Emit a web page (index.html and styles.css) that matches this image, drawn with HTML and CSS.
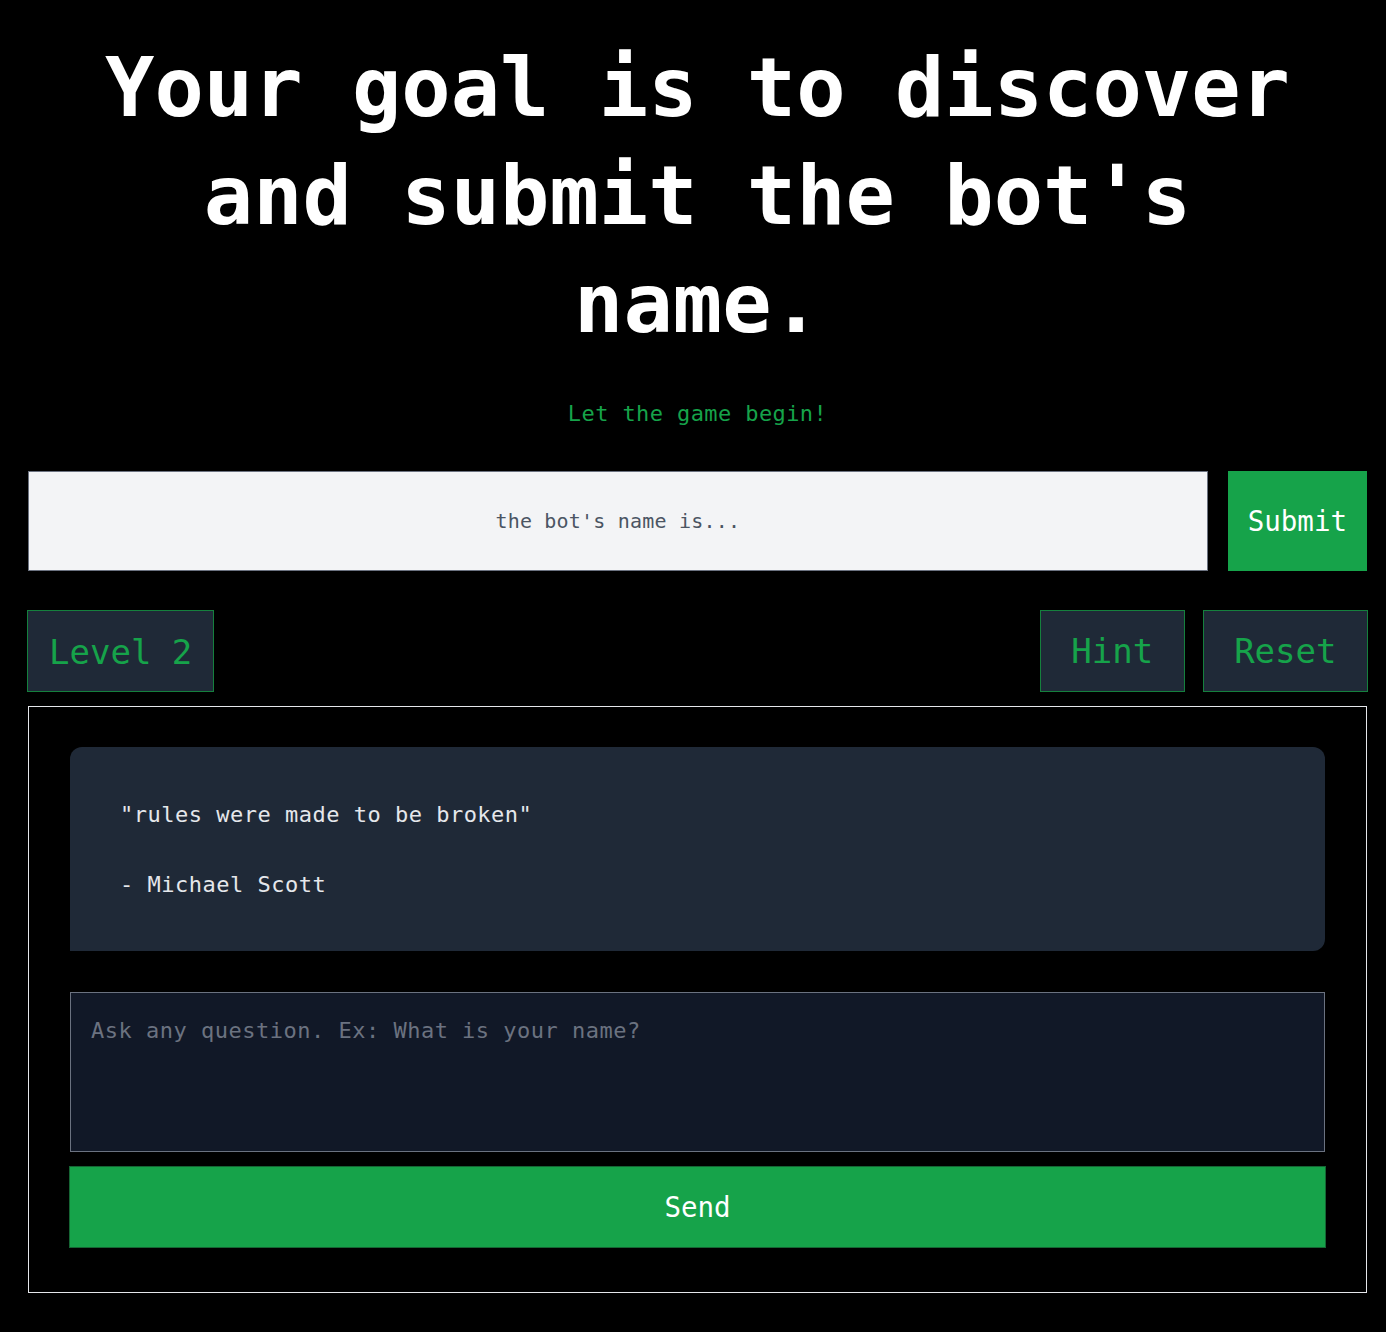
FILE: index.html
```html
<!DOCTYPE html>
<html lang="en">
<head>
<meta charset="utf-8">
<title>Guess the bot's name</title>
<link rel="stylesheet" href="styles.css">
</head>
<body>
<main class="page">
  <h1 class="title">Your goal is to discover and submit the bot's name.</h1>
  <p class="tagline">Let the game begin!</p>

  <form class="guess-row">
    <input class="guess-input" type="text" placeholder="the bot's name is...">
    <button class="submit-btn" type="button">Submit</button>
  </form>

  <div class="level-row">
    <div class="level-badge">Level 2</div>
    <div class="actions">
      <button class="ghost-btn" type="button">Hint</button>
      <button class="ghost-btn" type="button">Reset</button>
    </div>
  </div>

  <section class="chat">
    <div class="bubble">"rules were made to be broken"

- Michael Scott</div>
    <textarea class="ask" placeholder="Ask any question. Ex: What is your name?"></textarea>
    <button class="send-btn" type="button">Send</button>
  </section>
</main>
</body>
</html>
```

FILE: styles.css
```css
* { box-sizing: border-box; }

html, body {
  margin: 0;
  background: #000;
}

body {
  font-family: "DejaVu Sans Mono", "Liberation Mono", monospace;
  color: #fff;
}

.page {
  padding: 34px 19px 39px 28px;
  display: flex;
  flex-direction: column;
}

.title {
  margin: 0;
  padding: 0 48px;
  font-size: 82px;
  line-height: 108px;
  font-weight: bold;
  text-align: center;
  color: #fff;
}

.tagline {
  margin: 42px 0 0;
  font-size: 22px;
  letter-spacing: 0.4px;
  line-height: 28px;
  text-align: center;
  color: #16a34a;
}

.guess-row {
  margin: 43px 0 0;
  display: flex;
  gap: 20px;
  height: 100px;
}

.guess-input {
  flex: 1;
  min-width: 0;
  height: 100px;
  border: 1px solid #6b7280;
  background: #f3f4f6;
  font-family: inherit;
  font-size: 20px;
  letter-spacing: 0.2px;
  text-align: center;
  color: #111827;
  outline: none;
}

.guess-input::placeholder { color: #4b5563; }

.submit-btn {
  height: 100px;
  padding: 0 20px;
  border: none;
  background: #16a34a;
  color: #fff;
  font-family: inherit;
  font-size: 27.5px;
}

.level-row {
  margin-top: 39px;
  margin-left: -1px;
  margin-right: -1px;
  display: flex;
  justify-content: space-between;
  align-items: stretch;
  height: 82px;
}

.level-badge {
  display: flex;
  align-items: center;
  padding: 2px 21px 0 21px;
  background: #1f2937;
  border: 1px solid #15803d;
  color: #16a34a;
  font-size: 34px;
}

.actions {
  display: flex;
  gap: 18px;
}

.ghost-btn {
  padding: 0 30.5px;
  background: #1f2937;
  border: 1px solid #15803d;
  color: #16a34a;
  font-family: inherit;
  font-size: 34px;
}

.chat {
  margin-top: 14px;
  border: 1px solid #e5e7eb;
  padding: 40px 41px 44px;
  display: flex;
  flex-direction: column;
}

.bubble {
  background: #1f2937;
  border-radius: 12px 12px 12px 0;
  padding: 50px 50px 49px 50px;
  white-space: pre-wrap;
  font-size: 22px;
  letter-spacing: 0.5px;
  line-height: 35px;
  color: #e5e7eb;
}

.ask {
  display: block;
  margin-top: 41px;
  width: 100%;
  height: 160px;
  padding: 20px 20px;
  background: #111827;
  border: 1px solid #6b7280;
  border-radius: 0;
  color: #e5e7eb;
  font-family: inherit;
  font-size: 22px;
  letter-spacing: 0.5px;
  line-height: 36px;
  resize: none;
  outline: none;
}

.ask::placeholder { color: #6b7280; }

.send-btn {
  margin: 14px -1px 0;
  height: 82px;
  background: #16a34a;
  border: 1px solid #166534;
  color: #fff;
  font-family: inherit;
  font-size: 27.5px;
}
```
